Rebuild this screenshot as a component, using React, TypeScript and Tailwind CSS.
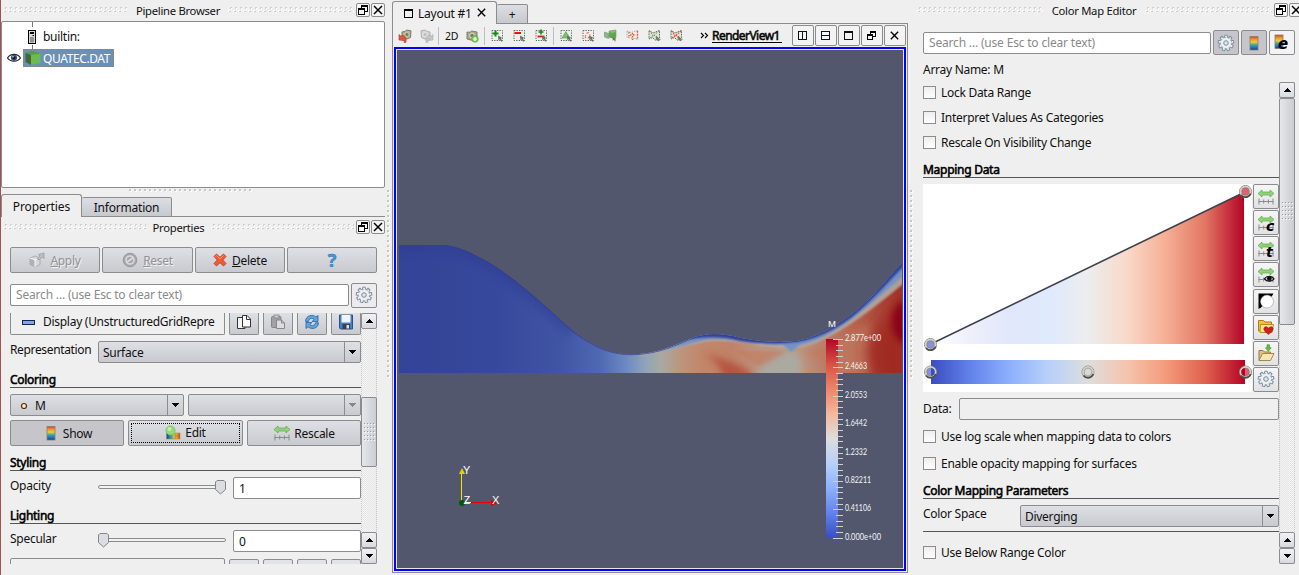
import React from "react";

type Kids = { children?: React.ReactNode; className?: string };

const FACE = "bg-gradient-to-b from-[#dfe0e5] to-[#c9cad0]";
const EDGE = "border border-[#8c8c8e] rounded-[2px]";

/* ---------- small building blocks ---------- */

function Grip({ className = "" }: { className?: string }) {
  const id = React.useId();
  return (
    <svg className={`block h-[6px] ${className}`} shapeRendering="crispEdges">
      <defs>
        <pattern id={id} width="5" height="6" patternUnits="userSpaceOnUse">
          <rect x="0" y="3" width="2" height="2" fill="#fff" />
          <rect x="1" y="4" width="2" height="1" fill="#cbcbcb" />
          <rect x="2" y="0" width="2" height="2" fill="#d0d0d0" />
          <rect x="3" y="1" width="1" height="2" fill="#fff" />
        </pattern>
      </defs>
      <rect width="100%" height="6" fill={`url(#${id})`} />
    </svg>
  );
}

function DotLine({ className = "", vertical = false }: { className?: string; vertical?: boolean }) {
  const id = React.useId();
  return (
    <svg className={`block ${className}`} shapeRendering="crispEdges">
      <defs>
        <pattern id={id} width={vertical ? 3 : 5} height={vertical ? 5 : 3} patternUnits="userSpaceOnUse">
          <rect x="1" y="1" width="2" height="2" fill="#fff" />
          <rect x="0" y="0" width="2" height="2" fill="#c6c6c6" />
        </pattern>
      </defs>
      <rect width="100%" height="100%" fill={`url(#${id})`} />
    </svg>
  );
}

function RestoreGlyph({ s = 12 }: { s?: number }) {
  return (
    <svg width={s} height={s} viewBox="0 0 12 12" fill="none" stroke="#000" shapeRendering="crispEdges">
      <path d="M4.500 5V2.500h6v5H8M4 1.500h7M1.500 5.500h6v5h-6zM1 4.500h7" />
    </svg>
  );
}

function SmallRestoreGlyph() {
  return (
    <svg width="9" height="9" viewBox="0 0 9 9" fill="none" stroke="#000" shapeRendering="crispEdges">
      <path d="M3.500 3V1.500h5v4H6M3 .5h6M.5 4.500h5v4h-5zM0 3.500h6" />
    </svg>
  );
}

function CloseGlyph({ s = 12 }: { s?: number }) {
  return (
    <svg width={s} height={s} viewBox="0 0 12 12" stroke="#000" strokeWidth="1.500">
      <path d="M2 2l8 8M10 2l-8 8" />
    </svg>
  );
}

function DockButtons({ className = "" }: { className?: string }) {
  return (
    <div className={`flex gap-[1px] ${className}`}>
      <span className={`flex h-[14px] w-[14px] shrink-0 items-center justify-center bg-[#f4f4f4] ${EDGE}`}>
        <RestoreGlyph />
      </span>
      <span className={`flex h-[14px] w-[14px] shrink-0 items-center justify-center bg-[#f4f4f4] ${EDGE}`}>
        <CloseGlyph />
      </span>
    </div>
  );
}

function Arrow({ up = false, fill = "#000" }: { up?: boolean; fill?: string }) {
  return (
    <svg width="8" height="4" viewBox="0 0 8 4" shapeRendering="crispEdges">
      <path d={up ? "M0 4L4 0l4 4z" : "M0 0l4 4 4-4z"} fill={fill} />
    </svg>
  );
}

function Btn({ children, className = "" }: Kids) {
  return <div className={`flex items-center justify-center ${FACE} ${EDGE} ${className}`}>{children}</div>;
}

function Combo({ children, className = "", disabled = false }: Kids & { disabled?: boolean }) {
  return (
    <div className={`flex h-[22px] ${FACE} ${EDGE} ${className}`}>
      <div className="flex flex-1 items-center pl-[4px] pt-[1px]">{children}</div>
      <div className="flex w-[16px] items-center justify-center border-l border-[#8c8c8e] pr-[1px]">
        <Arrow fill={disabled ? "#85868a" : "#000"} />
      </div>
    </div>
  );
}

function Heading({ children, className = "" }: Kids) {
  return (
    <div className={`h-[17px] border-b border-[#555] leading-[18px] text-black [-webkit-text-stroke:0.55px_black] ${className}`}>
      {children}
    </div>
  );
}

function Check({ children, className = "" }: Kids) {
  return (
    <div className={`flex h-[13px] items-center gap-[5px] ${className}`}>
      <span className="h-[13px] w-[13px] border border-[#8c8c8e] bg-gradient-to-b from-[#eee] to-white" />
      <span>{children}</span>
    </div>
  );
}

function ScrollBar({ before, thumb }: { before: string; thumb: string }) {
  const id = React.useId();
  const cap = `flex h-[16px] shrink-0 items-center justify-center bg-gradient-to-b from-[#f2f2f4] to-[#d9dade] pr-[1px] ${EDGE}`;
  return (
    <div className="flex w-[16px] shrink-0 flex-col border-x border-dotted border-[#c8c8c8] bg-[repeating-conic-gradient(#e6e6e6_0_25%,#f4f4f4_0_50%)] bg-[length:2px_2px]">
      <div className={`-mx-px ${cap}`}><Arrow up /></div>
      <div className={before} />
      <div className={`-mx-px flex items-center justify-center bg-gradient-to-r from-[#e6e7eb] to-[#cccdd3] ${EDGE} ${thumb}`}>
        <svg width="11" height="19" shapeRendering="crispEdges">
          <defs>
            <pattern id={id} width="3" height="4" patternUnits="userSpaceOnUse">
              <rect x="1" y="1" width="1" height="1" fill="#fff" />
              <rect width="1" height="1" fill="#9a9ba0" />
            </pattern>
          </defs>
          <rect width="11" height="19" fill={`url(#${id})`} />
        </svg>
      </div>
      <div className="flex-1" />
      <div className={`-mx-px ${cap}`}><Arrow up /></div>
      <div className={`-mx-px ${cap}`}><Arrow /></div>
    </div>
  );
}

/* ---------- icons ---------- */

function Gear({ s = 18, c = "#7f8fa0" }: { s?: number; c?: string }) {
  const teeth = Array.from({ length: 9 }, (_, i) => i * 40);
  return (
    <svg width={s} height={s} viewBox="0 0 18 18">
      {teeth.map((a) => (
        <path key={a} d="M7.400 3.500L7.800 1.200h2.400l.4 2.300" fill="#eef0f3" stroke={c} strokeWidth="1" transform={`rotate(${a} 9 9)`} />
      ))}
      <circle cx="9" cy="9" r="5.600" fill="#edf0f3" stroke={c} strokeWidth="0.8" strokeDasharray="2 1.900" />
      <circle cx="9" cy="9" r="2.300" fill="#dfe2e6" stroke={c} strokeWidth="1" />
    </svg>
  );
}

function RainbowStops() {
  return (
    <>
      <stop offset="0" stopColor="#c9481c" />
      <stop offset="0.2" stopColor="#f0932b" />
      <stop offset="0.42" stopColor="#e9cf3c" />
      <stop offset="0.6" stopColor="#4dab8d" />
      <stop offset="0.78" stopColor="#1b7fcb" />
      <stop offset="1" stopColor="#173a86" />
    </>
  );
}

function Rainbow({ e = false }: { e?: boolean }) {
  const id = React.useId();
  return (
    <svg width="18" height="18" viewBox="0 0 18 18">
      <defs>
        <linearGradient id={id} x1="0" x2="0" y1="0" y2="1"><RainbowStops /></linearGradient>
      </defs>
      <rect x={e ? 2 : 5} y={e ? 1 : 2.500} width="8" height="13.500" fill={`url(#${id})`} stroke="#8d7c6b" strokeWidth="0.8" />
      {e && <text x="5" y="15" fontSize="15" fontWeight="900" fontStyle="italic" fontFamily="DejaVu Sans, sans-serif">e</text>}
    </svg>
  );
}

function RangeIcon({ letter, eye = false }: { letter?: string; eye?: boolean }) {
  return (
    <svg width="18" height="18" viewBox="0 0 18 18">
      <path d="M1.500 13.500h15M2 10.500v6M6.700 11.500v4M11.400 11.500v4M16 10.500v6" stroke="#8b8b8b" fill="none" />
      <path d="M1 5.500L5 2v2h8V2l4 3.500L13 9V7H5v2z" fill="#8fd577" stroke="#5ea848" strokeWidth="0.7" />
      {letter && (
        <text x="9" y="16.500" fontSize="14" fontWeight="900" fontStyle="italic" fontFamily="DejaVu Sans, sans-serif">{letter}</text>
      )}
      {eye && (
        <>
          <path d="M7.500 12.800c2.300-3.400 7-3.400 9.500 0-2.500 3.200-7.200 3.200-9.500 0z" fill="#ddd" stroke="#111" strokeWidth="1.200" />
          <circle cx="12.300" cy="12.500" r="2.400" fill="#111" />
        </>
      )}
    </svg>
  );
}

function InvertIcon() {
  return (
    <svg width="18" height="18" viewBox="0 0 18 18">
      <path d="M1.500 1.500h15L15 4 4 15.500l-2.500 1.500z" fill="#000" />
      <circle cx="10" cy="9.500" r="6.500" fill="#fff" stroke="#888" strokeWidth="0.5" />
    </svg>
  );
}

function FolderHeart() {
  return (
    <svg width="18" height="18" viewBox="0 0 18 18">
      <path d="M1.500 4V2.500h5L8 4h6.500v9h-13z" fill="#eec04a" stroke="#b27a10" />
      <path d="M3.500 6.500h13l-1.500 8h-12z" fill="#fbe48c" stroke="#c08a1c" />
      <path d="M11.500 16.500C7 13 6.500 11.500 7 10c.8-1.800 3.500-1.500 4.500.3 1-1.800 3.700-2.100 4.500-.3.500 1.500 0 3-4.500 6.500z" fill="#cf1f22" stroke="#931012" strokeWidth="0.5" />
    </svg>
  );
}

function FolderUp() {
  return (
    <svg width="18" height="18" viewBox="0 0 18 18">
      <path d="M2 16.500V6.500h4l1.500 1.500h6v4" fill="#e0c27c" stroke="#94783a" />
      <path d="M2 16.500l3.500-7H17l-3.500 7z" fill="#f6e6b6" stroke="#a5884a" />
      <path d="M12.500 0.800h-2.500v3H8.500l2.800 3.400 2.900-3.400h-1.700z" fill="#63c23c" stroke="#3b8a22" strokeWidth="0.6" />
    </svg>
  );
}

function SelIcon({ kind }: { kind: "plus" | "minus" | "both" | "tri" | "dots" }) {
  return (
    <svg width="13" height="13" viewBox="0 0 13 13">
      <rect x="1" y="1.500" width="10.500" height="10" fill="none" stroke="#5d6859" strokeDasharray="1.300 1.200" />
      {kind === "plus" && <path d="M4.500 1.500v6M1.500 4.500h6" stroke="#168a16" strokeWidth="2" />}
      {kind === "minus" && <path d="M1.500 4h6.500" stroke="#e81414" strokeWidth="2" />}
      {kind === "both" && <><path d="M6 .5v5M3.500 3h5" stroke="#168a16" strokeWidth="1.600" /><path d="M2.500 7.500h7" stroke="#e81414" strokeWidth="1.800" /></>}
      {kind === "tri" && <path d="M5.800 2.500L10 9H2z" fill="#79c069" stroke="#559c49" strokeWidth="0.6" />}
      {kind === "dots" && <path d="M5.800 3L9.500 8.500H2.500z" fill="none" stroke="#ee7857" strokeDasharray="1.400 1.600" strokeWidth="1.300" />}
      <path d="M7 6.500l.4 5 1.300-1.200 1.800 2.500 1-.8-1.700-2.400 1.700-.5z" fill="#66705f" />
    </svg>
  );
}

function MeshIcon({ kind }: { kind: "solid" | "points" | "poly" | "polypts" }) {
  const red = kind === "points" || kind === "polypts";
  const poly = kind === "poly" || kind === "polypts";
  return (
    <svg width="13" height="13" viewBox="0 0 13 13">
      {kind === "solid" && (
        <>
          <path d="M.5 3l4 1.500v5L.5 8zM5 2l7-1v7l-1 3-2-2-4-.5z" fill="#8fb583" stroke="#76936d" strokeWidth="0.6" />
          <path d="M5 3l3 1v5L5 7.500zM8 4l4-1v5.500L8 9z" fill="#5fa84f" />
          <path d="M8.500 7.500l.3 4.200 1-.9 1.200 1.700.8-.6-1.200-1.700h1.200z" fill="#66705f" />
        </>
      )}
      {kind === "points" && (
        <>
          <path d="M1 2l4 1.500 6.500-2v8.500L8 9.500 5 9 1 8.500z" fill="none" stroke="#b3a89b" strokeDasharray="1.500 1" />
          <path d="M3 3v6M6.500 4v7M11.500 2v9M4 6h6" stroke="#e9583b" strokeWidth="1.400" strokeDasharray="1.500 1.400" />
        </>
      )}
      {poly && (
        <>
          <path d="M1 1.500l4 2.500 6.500-2.500v6L12 11 7 11 4.500 8.500 1 10z" fill="#dfe4da" stroke="#56704f" strokeDasharray="1.600 0.900" />
          <path d="M2 2l3 5 6-5M2 9l4-3 4 5" stroke={red ? "#e9583b" : "#6f9365"} fill="none" strokeWidth={red ? 1.300 : 0.900} strokeDasharray="1.500 .9" />
          <path d="M8 6.500l.4 5 1-.9 1.200 1.700.9-.6-1.200-1.700h1.200z" fill="#66705f" />
        </>
      )}
    </svg>
  );
}

function CameraIcon({ off = false }: { off?: boolean }) {
  return (
    <svg width="14" height="14" viewBox="0 0 14 14">
      <g transform={off ? "translate(14 0) scale(-1 1)" : undefined}>
        <path d="M4 3l3-.5L8.500 1l4.500.8-.5 6.700-3.500 1.500-5-1z" fill={off ? "#d4d4d4" : "#b5b49d"} stroke={off ? "#b0b0b0" : "#7c7a62"} />
        <circle cx="9" cy="5.500" r="2" fill={off ? "#bcbcbc" : "#7b7963"} stroke={off ? "#eee" : "#d9d8c6"} strokeWidth="0.7" />
        <path d="M1 11V5.500l1.800 1.600c3-1.600 6 .4 5.200 6.200l-1.800.2c.4-3-.6-4.400-2-3.600L6 11.500z" fill={off ? "#c6c6c6" : "#dd5c3d"} stroke={off ? "#ababab" : "#a5341c"} strokeWidth="0.6" />
      </g>
    </svg>
  );
}

function CameraPlus() {
  return (
    <svg width="13" height="14" viewBox="0 0 13 14">
      <path d="M1 3l3 .3L5.500 2 11 3v7L7 11.500 1 10z" fill="#a9ab90" stroke="#7d7f67" />
      <circle cx="6" cy="6.500" r="2.300" fill="#7a7b67" stroke="#deddcb" />
      <circle cx="9" cy="10" r="3.300" fill="#7bcf58" stroke="#55a838" strokeWidth="0.6" />
      <path d="M9 8v4M7 10h4" stroke="#fff" strokeWidth="1.200" />
    </svg>
  );
}

function CopyIcon({ gray = false }: { gray?: boolean }) {
  return (
    <svg width="16" height="16" viewBox="0 0 16 16">
      {gray ? (
        <>
          <rect x="1.500" y="2.500" width="9.500" height="11" rx="1" fill="#a2a2a4" stroke="#858588" />
          <rect x="4" y="1" width="5" height="3" fill="#c8c8ca" stroke="#858588" strokeWidth="0.8" />
          <path d="M6.500 6h5l3 3v5.500h-8z" fill="#dcdcde" stroke="#88888b" />
          <path d="M11.500 6v3h3" fill="none" stroke="#88888b" />
        </>
      ) : (
        <>
          <path d="M1.500 3.500h5L9 6v8.500H1.500z" fill="#f4f4f4" stroke="#333" />
          <path d="M6.500 1.500h4.500l3.500 3.500v8h-8z" fill="#fafafa" stroke="#333" />
          <path d="M10.500 1.500v4h4" fill="none" stroke="#333" />
        </>
      )}
    </svg>
  );
}

function RefreshIcon() {
  return (
    <svg width="16" height="16" viewBox="0 0 16 16">
      <g fill="#64a4dc" stroke="#25629f" strokeWidth="0.8">
        <path d="M1.500 7.500C1.500 1.500 8.500-.2 12 3l2-1.500v6H8.200L10 5.300C8 3.500 5 4.500 4.500 7.500z" />
        <path d="M14.500 8.800c0 5.700-7 7.200-10.500 4L2 14.500v-6h5.800L6 10.800c2 1.700 5 .8 5.500-2z" />
      </g>
    </svg>
  );
}

function SaveIcon() {
  return (
    <svg width="16" height="16" viewBox="0 0 16 16">
      <path d="M1.500 1h13v14h-12l-1-1z" fill="#4a7ec0" stroke="#28518c" />
      <rect x="3.500" y="1" width="9" height="7.500" fill="#eef4fb" />
      <rect x="4.500" y="10" width="7.500" height="5" fill="#3a3f4a" />
      <rect x="8.500" y="11" width="2.500" height="3.500" fill="#dbe2ec" />
    </svg>
  );
}

function ApplyIcon() {
  return (
    <svg width="16" height="16" viewBox="0 0 16 16">
      <path d="M1 6l5-2 5 2v6.500L6 15l-5-2.500z" fill="#d9d9db" stroke="#a0a0a3" strokeWidth="0.8" />
      <path d="M1 6l5 2v7l-5-2.500z" fill="#b1b1b4" />
      <path d="M1 6l5 2 5-2M6 8v7" fill="none" stroke="#f7f7f7" />
      <path d="M8 7l3-3-1.500-1.500L15 1v5.500L13 5l-3 3z" fill="#bebec1" stroke="#97979a" strokeWidth="0.7" />
    </svg>
  );
}

function ResetIcon() {
  return (
    <svg width="16" height="16" viewBox="0 0 16 16">
      <circle cx="8" cy="8" r="6.800" fill="#a8a8ab" stroke="#98989b" />
      <circle cx="8" cy="8" r="4" fill="none" stroke="#dadadc" strokeWidth="1.600" />
      <path d="M4.500 10.500l7-5" stroke="#dadadc" strokeWidth="1.800" />
    </svg>
  );
}

function DeleteIcon() {
  return (
    <svg width="14" height="14" viewBox="0 0 14 14">
      <path d="M1 3.500L3.500 1 7 4.300 10.500 1 13 3.500 9.700 7 13 10.500 10.500 13 7 9.700 3.500 13 1 10.500 4.300 7z" fill="#ee5a37" stroke="#c63d1c" strokeWidth="0.9" />
      <path d="M2.500 3.500l1-1L7 5.800l3.500-3.300" stroke="#ff9a7c" fill="none" strokeWidth="0.9" />
    </svg>
  );
}

function EditIcon() {
  const id = React.useId();
  return (
    <svg width="16" height="16" viewBox="0 0 16 16">
      <defs>
        <linearGradient id={id} x1="1" x2="0"><RainbowStops /></linearGradient>
      </defs>
      <rect x="1.500" y="8" width="13.500" height="6" fill={`url(#${id})`} stroke="#a8862f" strokeWidth="0.5" />
      <path d="M10 8v6M10 11h5" stroke="#7b6b3a" strokeWidth="0.5" />
      <circle cx="5.500" cy="5.500" r="4.600" fill="#97d878" stroke="#76bd57" strokeWidth="0.7" />
      <circle cx="4.500" cy="4" r="2" fill="#c4eeae" />
    </svg>
  );
}

function ServerIcon() {
  return (
    <svg width="8" height="14" viewBox="0 0 8 14">
      <rect x="0.500" y="0.500" width="7" height="13" fill="#d8d8d8" stroke="#000" />
      <rect x="2" y="2" width="4" height="2" fill="#000" />
      <rect x="4.500" y="5" width="1.500" height="1" fill="#000" />
      <rect x="2" y="7" width="4" height="5.500" fill="#929292" />
    </svg>
  );
}

function CubeIcon() {
  return (
    <svg width="16" height="16" viewBox="0 0 16 16">
      <path d="M0.500 3L8 .8 15.500 3.500 8 5z" fill="#5c9a45" />
      <path d="M.5 3L6 5v10L.5 12z" fill="#3f6a31" />
      <path d="M6 5l9.500-1.500V13L6 15z" fill="#6db952" />
    </svg>
  );
}

function EyeIcon() {
  return (
    <svg width="14" height="10" viewBox="0 0 14 10">
      <path d="M.5 5C3.500.2 10.500.2 13.500 5 10.500 9.300 3.500 9.300.5 5z" fill="#fff" stroke="#222" strokeWidth="1.200" />
      <circle cx="7" cy="4.800" r="3.100" fill="#3a5485" />
      <circle cx="7" cy="4.800" r="1.600" fill="#10162b" />
      <circle cx="6" cy="3.800" r="0.800" fill="#dce6f6" />
    </svg>
  );
}

/* ---------- left dock ---------- */

function SliderRow({ label, value, end }: { label: string; value: string; end: boolean }) {
  return (
    <div className="flex h-[22px]">
      <span className="w-[88px] leading-[18px]">{label}</span>
      <svg width="128" height="22" viewBox="0 0 128 22">
        <rect x="0.500" y="8.500" width="127" height="3" rx="1.500" fill="#f2f2f2" stroke="#8c8c8e" />
        <path transform={end ? "translate(117 3)" : "translate(0 3)"} d="M2 .5h7l1.500 1.500v7.500L5.500 14 .5 9.500V2z" fill="#dcdde1" stroke="#858588" />
      </svg>
      <div className={`ml-[7px] flex w-[128px] items-center bg-white pl-[5px] pt-[1px] ${EDGE}`}>{value}</div>
    </div>
  );
}

function LeftDock() {
  const sq = `flex h-[22px] w-[30px] items-center justify-center border border-t-0 border-[#8c8c8e] rounded-b-[2px] pb-[4px] ${FACE}`;
  return (
    <div className="flex h-full w-[390px] border-l border-[#a25252]">
      <div className="flex w-[385px] flex-col">
        <div className="flex h-[21px] pl-[2px]">
          <Grip className="mt-[7px] w-[125px]" />
          <span className="w-[100px] text-center text-[11.250px] leading-[22px]">Pipeline Browser</span>
          <Grip className="mt-[7px] w-[126px]" />
          <DockButtons className="ml-[2px] mt-[3px]" />
        </div>
        <div className={`flex h-[167px] flex-col bg-white ${EDGE}`}>
          <div className="ml-[30px] h-[5px] w-px bg-[#777]" />
          <div className="mt-[1px] flex h-[17px] items-center pl-[26px]">
            <ServerIcon />
            <span className="ml-[7px] mt-[1px]">builtin:</span>
          </div>
          <div className="ml-[30px] h-[4px] w-px bg-[#777]" />
          <div className="flex h-[18px] items-center pl-[5px]">
            <EyeIcon />
            <div className="ml-[2px] flex h-[18px] w-[91px] items-center border border-dotted border-[#a2805f] bg-[#6a90b8] pl-[1px] text-white">
              <CubeIcon />
              <span className="ml-[2px] mt-[1px] tracking-[-0.4px]">QUATEC.DAT</span>
            </div>
          </div>
        </div>
        <DotLine className="ml-[128px] mt-[1px] h-[3px] w-[124px]" />
        <div className="mt-[2px] flex h-[23px] items-end">
          <div className="flex h-[23px] w-[81px] items-center justify-center rounded-t-[3px] border border-b-0 border-[#8c8c8e] pt-[2px] tracking-[-0.1px]">Properties</div>
          <div className="flex h-[20px] w-[90px] items-center justify-center rounded-t-[2px] border border-l-0 border-[#8c8c8e] bg-gradient-to-b from-[#dddee3] to-[#c8c9cf] pt-[2px] tracking-[-0.2px]">Information</div>
          <div className="flex-1 border-b border-[#8c8c8e]" />
        </div>
        <div className="flex h-[30px] pl-[2px]">
          <Grip className="mt-[7px] w-[143px]" />
          <span className="w-[65px] text-center text-[11.250px] leading-[22px]">Properties</span>
          <Grip className="mt-[7px] w-[143px]" />
          <DockButtons className="ml-[2px] mt-[3px]" />
        </div>
        <div className="ml-[9px] flex h-[26px] gap-[2px]">
          <Btn className="w-[90px] gap-[5px] text-[#929295] [text-shadow:1px_1px_0_#f3f3f3]"><ApplyIcon /><span className="mt-[1px]"><u>A</u>pply</span></Btn>
          <Btn className="w-[91px] gap-[5px] text-[#929295] [text-shadow:1px_1px_0_#f3f3f3]"><ResetIcon /><span className="mt-[1px]"><u>R</u>eset</span></Btn>
          <Btn className="w-[90px] gap-[5px]"><DeleteIcon /><span className="mt-[1px]"><u>D</u>elete</span></Btn>
          <Btn className="w-[90px] text-[18px] font-bold text-[#3c9bd8] [-webkit-text-stroke:0.5px_#2d75ad]">?</Btn>
        </div>
        <div className="ml-[9px] mt-[9px] flex h-[26px] items-center gap-[2px]">
          <div className={`flex h-[22px] w-[339px] items-center bg-white pl-[5px] tracking-[-0.18px] text-[#8a8a8a] ${EDGE}`}>Search ... (use Esc to clear text)</div>
          <div className={`flex h-[25px] w-[26px] items-center justify-center bg-[#ececee] ${EDGE}`}><Gear /></div>
        </div>
        <div className="ml-[9px] mt-[5px] flex h-[251px]">
          <div className="flex w-[351px] flex-col overflow-hidden">
            <div className="flex gap-[4px]">
              <div className="flex h-[22px] w-[215px] items-center whitespace-nowrap rounded-b-[2px] border border-t-0 border-[#8c8c8e] pb-[3px] pl-[11px]">
                <svg width="13" height="5" viewBox="0 0 13 5" className="shrink-0"><rect x="0.500" y="0.500" width="12" height="4" fill="#87a4e8" stroke="#17234f" /></svg>
                <span className="ml-[8px] tracking-[-0.28px]">Display (UnstructuredGridRepre</span>
              </div>
              <div className={sq}><CopyIcon /></div>
              <div className={sq}><CopyIcon gray /></div>
              <div className={sq}><RefreshIcon /></div>
              <div className={sq}><SaveIcon /></div>
            </div>
            <div className="mt-[6px] flex">
              <span className="w-[88px] leading-[18px] tracking-[-0.35px]">Representation</span>
              <Combo className="w-[263px]">Surface</Combo>
            </div>
            <Heading className="mt-[8px]">Coloring</Heading>
            <div className="mt-[6px] flex gap-[4px]">
              <Combo className="w-[174px]">
                <svg width="8" height="8" viewBox="0 0 8 8" className="ml-[5px] mr-[7px]"><circle cx="4" cy="4" r="2.500" fill="#ffe9bd" stroke="#4e2a13" strokeWidth="1.200" /></svg>M
              </Combo>
              <Combo className="w-[173px]" disabled />
            </div>
            <div className="mt-[4px] flex gap-[4px]">
              <div className={`flex h-[26px] w-[114px] items-center justify-center gap-[3px] bg-[#c6c6ca] ${EDGE}`}><Rainbow /><span className="mt-[2px]">Show</span></div>
              <Btn className="h-[26px] w-[115px] p-[2px]">
                <div className="flex h-full w-full items-center justify-center gap-[4px] border border-dotted border-black"><EditIcon />Edit</div>
              </Btn>
              <Btn className="h-[26px] w-[114px] gap-[3px]"><RangeIcon /><span className="mt-[1px]">Rescale</span></Btn>
            </div>
            <Heading className="mt-[8px]">Styling</Heading>
            <div className="mt-[6px]"><SliderRow label="Opacity" value="1" end /></div>
            <Heading className="mt-[8px]">Lighting</Heading>
            <div className="mt-[6px]"><SliderRow label="Specular" value="0" end={false} /></div>
            <div className="mt-[6px] flex h-[20px] shrink-0 gap-[4px]">
              <div className="w-[215px] rounded-t-[2px] border border-[#8c8c8e]" />
              {[0, 1, 2, 3].map((i) => <div key={i} className={`mt-[1px] w-[30px] bg-[#e2e3e7] ${EDGE}`} />)}
            </div>
          </div>
          <ScrollBar before="h-[68px]" thumb="h-[70px]" />
        </div>
      </div>
      <DotLine vertical className="ml-[2px] mt-[190px] h-[190px] w-[3px]" />
    </div>
  );
}

/* ---------- render view ---------- */

const WALL = "C461 247 478 255 502 271 C530 291 550 311 573 331 C595 348 612 354 630 354.500 C655 354 668 348 690 339 C704 333 722 333 740 338 C760 342 780 343 797 341 C820 337 845 322 866 302 C880 289 890 276 902 263";

function Flow() {
  const labels = ["2.877e+00", "2.4663", "2.0553", "1.6442", "1.2332", "0.82211", "0.41106", "0.000e+00"];
  const widths = [36, 22, 22, 22, 22, 26, 26, 36];
  return (
    <svg width="506" height="518" viewBox="397 50 506 518" className="block bg-[#52576e]">
      <defs>
        <clipPath id="duct"><path d={`M399 245H444${WALL}V373H399z`} /></clipPath>
        <linearGradient id="base" gradientUnits="userSpaceOnUse" x1="399" x2="902" y1="0" y2="0">
          <stop offset="0" stopColor="#334397" />
          <stop offset="0.2" stopColor="#37499c" />
          <stop offset="0.32" stopColor="#4055a4" />
          <stop offset="0.4" stopColor="#4f69b2" />
          <stop offset="0.45" stopColor="#6c88c2" />
          <stop offset="0.49" stopColor="#8fa4ba" />
          <stop offset="0.52" stopColor="#a8aaa2" />
          <stop offset="0.56" stopColor="#bc957d" />
          <stop offset="0.6" stopColor="#c2876a" />
          <stop offset="0.66" stopColor="#c08268" />
          <stop offset="0.72" stopColor="#bc9480" />
          <stop offset="0.8" stopColor="#bd9480" />
          <stop offset="0.9" stopColor="#b96650" />
          <stop offset="1" stopColor="#a03028" />
        </linearGradient>
        <linearGradient id="bar" x1="0" x2="0" y1="0" y2="1">
          <stop offset="0" stopColor="#b40426" />
          <stop offset="0.125" stopColor="#d65244" />
          <stop offset="0.25" stopColor="#ee8468" />
          <stop offset="0.375" stopColor="#f6b69b" />
          <stop offset="0.5" stopColor="#dddddd" />
          <stop offset="0.625" stopColor="#b8d0f9" />
          <stop offset="0.75" stopColor="#8db0fe" />
          <stop offset="0.875" stopColor="#6282ea" />
          <stop offset="1" stopColor="#3b4cc0" />
        </linearGradient>
        <filter id="b1" x="-10%" y="-30%" width="120%" height="160%"><feGaussianBlur stdDeviation="1.200" /></filter>
        <filter id="b3" x="-40%" y="-40%" width="180%" height="180%"><feGaussianBlur stdDeviation="3.500" /></filter>
        <filter id="b8" x="-60%" y="-60%" width="220%" height="220%"><feGaussianBlur stdDeviation="8" /></filter>
      </defs>
      <g clipPath="url(#duct)">
        <rect x="399" y="240" width="504" height="134" fill="url(#base)" />
        <path d={`M399 245H444C461 247 478 255 502 271 C530 291 550 311 573 331`} fill="none" stroke="#2d3a92" strokeWidth="14" opacity="0.4" filter="url(#b3)" />
        <path d="M705 354C722 358 752 368 754 378H722C724 370 715 360 705 354z" fill="#b5503c" filter="url(#b3)" opacity="0.9" />
        <path d="M735 351C755 352 775 350 786 353C778 360 768 363 758 366z" fill="#c47b61" filter="url(#b1)" opacity="0.6" />
        <path d="M754 378C762 364 780 355 792 350C800 354 804 364 800 378z" fill="#aaaaa2" filter="url(#b3)" />
        <path d="M803 352C830 346 850 338 870 322V376H835C825 362 815 356 803 352z" fill="#c07860" filter="url(#b3)" opacity="0.8" />
        <path d="M866 350C880 325 892 305 915 292V395H880z" fill="#a02a24" filter="url(#b8)" />
        <ellipse cx="904" cy="322" rx="12" ry="20" fill="#8a0016" filter="url(#b3)" />
        <path d="M640 356C665 352 690 344 712 341C740 340 760 347 790 349C820 346 850 328 903 284V255H830L750 330H690L640 350z" fill="#b3aba0" filter="url(#b1)" opacity="0.9" />
        <path d="M625 352C660 356 690 342 712 339C740 338 765 345 783 345L791 352L800 345C825 340 850 323 903 276V250H830L750 325H690z" fill="#7592c6" filter="url(#b1)" />
        <path d="M690 339C704 337 722 336 740 341C760 344 780 344 797 342C822 338 847 324 868 303C880 292 890 280 904 266V250H820L740 325H690z" fill="#334399" filter="url(#b1)" />
        <path d={`M444 245${WALL}`} fill="none" stroke="#2f3c96" strokeWidth="1.600" opacity="0.7" />
      </g>
      <rect x="826" y="339" width="12" height="199" fill="url(#bar)" />
      {Array.from({ length: 36 }, (_, i) => (
        <rect key={i} x={i % 5 ? 836 : 833} y={339 + Math.round(i * 5.680)} width={i % 5 ? 7 : 10} height="1" fill="#cfcfcf" />
      ))}
      <g fill="#f4f4f4" fontFamily="Lato, 'Liberation Sans', sans-serif" fontSize="9" letterSpacing="0">
        {labels.map((l, i) => (
          <text key={l} x="845" y={341 + i * 28.400} textLength={widths[i]} lengthAdjust="spacingAndGlyphs">{l}</text>
        ))}
      </g>
      <text x="828" y="327" fontSize="9.500" fill="#fff" fontFamily="Liberation Sans, sans-serif">M</text>
      <path d="M461.500 502V474" stroke="#f0e600" />
      <path d="M462 468l3 6h-6z" fill="#e0d400" />
      <path d="M471 502.500H493" stroke="#e80000" />
      <path d="M464 502.500h7" stroke="#fff" />
      <path d="M498 503l-7-3v6z" fill="#e80000" />
      <circle cx="462" cy="503" r="3" fill="#05550f" />
      <g fill="#fff" fontFamily="Liberation Sans, sans-serif" fontSize="11">
        <text x="463" y="474">Y</text>
        <text x="492" y="504">X</text>
        <text x="463.500" y="504">Z</text>
      </g>
    </svg>
  );
}

function ViewButton({ children }: Kids) {
  return <div className={`flex h-[21px] w-[22px] items-center justify-center bg-[#f3f3f4] pr-[1px] ${EDGE}`}>{children}</div>;
}

function Layout() {
  const sep = "h-[18px] w-px bg-[#bdbdbd]";
  return (
    <div className="mt-[1px] flex h-[572px] w-[516px] flex-col">
      <div className="flex h-[23px] items-end">
        <div className="flex h-[23px] w-[105px] items-center rounded-t-[3px] border border-b-0 border-[#8c8c8e] pl-[11px]">
          <svg width="9" height="9" shapeRendering="crispEdges"><path d="M.5 1.500h8v7h-8zM0 .5h9" fill="none" stroke="#000" /></svg>
          <span className="ml-[5px] mt-[1px] whitespace-nowrap tracking-[-0.25px]">Layout #1</span>
          <span className="ml-[4px] mt-[-2px]"><CloseGlyph s={11} /></span>
        </div>
        <div className="flex h-[20px] w-[31px] items-center justify-center rounded-t-[2px] border border-l-0 border-[#8c8c8e] bg-gradient-to-b from-[#dddee3] to-[#c8c9cf] pt-[1px]">+</div>
        <div className="h-px flex-1 bg-[#8c8c8e]" />
      </div>
      <div className="flex flex-1 flex-col border border-t-0 border-[#8c8c8e]">
        <div className="flex h-[23px] items-center pl-[5px]">
          <div className="flex w-[40px] gap-[8px]"><CameraIcon /><CameraIcon off /></div>
          <div className={sep} />
          <span className="ml-[6px] w-[21px] text-[10.500px] tracking-[-0.3px]">2D</span>
          <CameraPlus />
          <div className={`ml-[5px] ${sep}`} />
          <div className="ml-[6px] flex w-[62px] gap-[9px]"><SelIcon kind="plus" /><SelIcon kind="minus" /><SelIcon kind="both" /></div>
          <div className={sep} />
          <div className="ml-[6px] flex gap-[9px]">
            <SelIcon kind="tri" /><SelIcon kind="dots" />
            <MeshIcon kind="solid" /><MeshIcon kind="points" /><MeshIcon kind="poly" /><MeshIcon kind="polypts" />
          </div>
          <svg width="9" height="7" viewBox="0 0 9 7" className="ml-[17px]" fill="none" stroke="#000" strokeWidth="1.200"><path d="M1 1l2.500 2.500L1 6M5 1l2.500 2.500L5 6" /></svg>
          <span className="ml-[3px] h-[15px] w-[70px] whitespace-nowrap border-b border-black leading-[15px] tracking-[-0.55px] [-webkit-text-stroke:0.55px_black]">RenderView1</span>
          <div className="ml-[10px] flex gap-[1px]">
            <ViewButton><svg width="9" height="9" shapeRendering="crispEdges"><path d="M.5.500h8v8h-8zM4.500 0v9" fill="#f2f6fd" stroke="#111" /></svg></ViewButton>
            <ViewButton><svg width="9" height="9" shapeRendering="crispEdges"><path d="M.5.500h8v8h-8zM0 4.500h9" fill="#f2f6fd" stroke="#111" /></svg></ViewButton>
            <ViewButton><svg width="9" height="9" shapeRendering="crispEdges"><path d="M.5.500h8v8h-8zM0 1.500h9" fill="none" stroke="#111" /></svg></ViewButton>
            <ViewButton><SmallRestoreGlyph /></ViewButton>
            <ViewButton><CloseGlyph s={11} /></ViewButton>
          </div>
        </div>
        <div className="ml-[1px] w-[512px] border-2 border-[#0202fa]">
          <div className="border border-[#e4e4ee]"><Flow /></div>
        </div>
      </div>
    </div>
  );
}

/* ---------- color map dock ---------- */

function Knob({ x, y, fill }: { x: number; y: number; fill: string }) {
  return (
    <g transform={`translate(${x} ${y})`}>
      <circle r="6" fill="#fff" fillOpacity="0.4" stroke="#8b8c7f" strokeWidth="1" />
      <circle r="4.800" fill="none" stroke="#d3d3c2" strokeWidth="1.800" />
      <path d="M-4.500 3.500A5.700 5.700 0 0 0 5.300 2" fill="none" stroke="#4c4d44" strokeWidth="1.800" />
      <circle r="3.900" fill={fill} stroke="#77776c" strokeWidth="0.500" />
    </g>
  );
}

function TransferChart() {
  const stops = ["#3b4cc0", "#6282ea", "#8db0fe", "#b8d0f9", "#dddddd", "#f5c4ad", "#f49a7b", "#de604d", "#b40426"];
  const soft = ["#ffffff", "#eeeffb", "#e1e7fb", "#dfeafd", "#ecedee", "#f9d9ca", "#f6af95", "#e27764", "#b40426"];
  return (
    <svg width="329" height="208" viewBox="923 184 329 208" className="block overflow-visible bg-white">
      <defs>
        <linearGradient id="cm">{stops.map((c, i) => <stop key={i} offset={i / 8} stopColor={c} />)}</linearGradient>
        <linearGradient id="cms">{soft.map((c, i) => <stop key={i} offset={i / 8} stopColor={c} />)}</linearGradient>
      </defs>
      <path d="M931 344L1244 192V344z" fill="url(#cms)" />
      <path d="M931 344L1245 192" stroke="#3f424c" strokeWidth="1.600" />
      <rect x="931" y="360" width="314" height="24" fill="url(#cm)" />
      <Knob x={930.500} y={344.500} fill="#8990dc" />
      <Knob x={1245.500} y={191.500} fill="#de6179" />
      <Knob x={930.500} y={372} fill="#8990dc" />
      <path d="M931 368.300a3.700 3.700 0 0 1 0 7.400z" fill="#3b4cc0" />
      <Knob x={1088} y={372} fill="#d9d9d6" />
      <Knob x={1245.500} y={372} fill="#de6179" />
      <path d="M1245 368.300a3.700 3.700 0 0 0 0 7.400z" fill="#b40426" />
    </svg>
  );
}

function ColorDock() {
  const top = `flex h-[25px] w-[26px] shrink-0 items-center justify-center ${EDGE}`;
  const tools = [
    <RangeIcon />, <RangeIcon letter="c" />, <RangeIcon letter="t" />, <RangeIcon eye />,
    <InvertIcon />, <FolderHeart />, <FolderUp />, <Gear />,
  ];
  return (
    <div className="flex h-full w-[391px] overflow-hidden">
      <DotLine vertical className="ml-[2px] mt-[190px] h-[190px] w-[3px] shrink-0" />
      <div className="ml-[4px] flex w-[390px] shrink-0 flex-col">
        <div className="flex h-[30px]">
          <Grip className="mt-[7px] w-[126px] shrink-0" />
          <span className="w-[102px] shrink-0 text-center text-[11.250px] leading-[22px]">Color Map Editor</span>
          <Grip className="mt-[7px] w-[127px] shrink-0" />
          <DockButtons className="ml-[2px] mt-[3px]" />
        </div>
        <div className="ml-[6px] flex h-[25px] items-center gap-[2px]">
          <div className={`flex h-[22px] w-[288px] items-center bg-white pl-[5px] tracking-[-0.18px] text-[#8a8a8a] ${EDGE}`}>Search ... (use Esc to clear text)</div>
          <div className={`${top} bg-[#c6c6ca]`}><Gear /></div>
          <div className={`${top} bg-[#c6c6ca]`}><Rainbow /></div>
          <div className={`${top} bg-[#f3f3f4]`}><Rainbow e /></div>
        </div>
        <div className="ml-[6px] h-[27px] leading-[29px]">Array Name: M</div>
        <div className="ml-[6px] flex h-[482px]">
          <div className="flex w-[356px] flex-col">
            <Check className="mt-[4px]">Lock Data Range</Check>
            <Check className="mt-[12px]">Interpret Values As Categories</Check>
            <Check className="mt-[12px]">Rescale On Visibility Change</Check>
            <Heading className="mt-[12px]">Mapping Data</Heading>
            <div className="mt-[6px] flex h-[208px] gap-[1px]">
              <TransferChart />
              <div className="flex flex-col justify-between">
                {tools.map((t, i) => (
                  <div key={i} className={`flex h-[25px] w-[26px] items-center justify-center bg-gradient-to-b from-[#f6f6f7] to-[#e2e2e5] ${EDGE}`}>{t}</div>
                ))}
              </div>
            </div>
            <div className="mt-[6px] flex h-[22px] items-center">
              <span className="w-[36px]">Data:</span>
              <div className={`h-[22px] w-[320px] ${EDGE}`} />
            </div>
            <Check className="mt-[10px]">Use log scale when mapping data to colors</Check>
            <Check className="mt-[14px]">Enable opacity mapping for surfaces</Check>
            <Heading className="mt-[12px]">Color Mapping Parameters</Heading>
            <div className="mt-[6px] flex">
              <span className="w-[97px] leading-[18px]">Color Space</span>
              <Combo className="w-[259px]">Diverging</Combo>
            </div>
            <div className="mt-[4px] h-px bg-[#555]" />
            <Check className="mt-[14px]">Use Below Range Color</Check>
          </div>
          <ScrollBar before="h-0" thumb="h-[227px]" />
        </div>
      </div>
    </div>
  );
}

export default function App() {
  return (
    <div className="flex h-[575px] w-[1299px] overflow-hidden bg-[#efefef] text-[12px] leading-[16px] tracking-[-0.28px] text-[#111]" style={{ fontFamily: "'Noto Sans', 'Open Sans', sans-serif" }}>
      <LeftDock />
      <div className="w-[2px]" />
      <Layout />
      <ColorDock />
    </div>
  );
}
